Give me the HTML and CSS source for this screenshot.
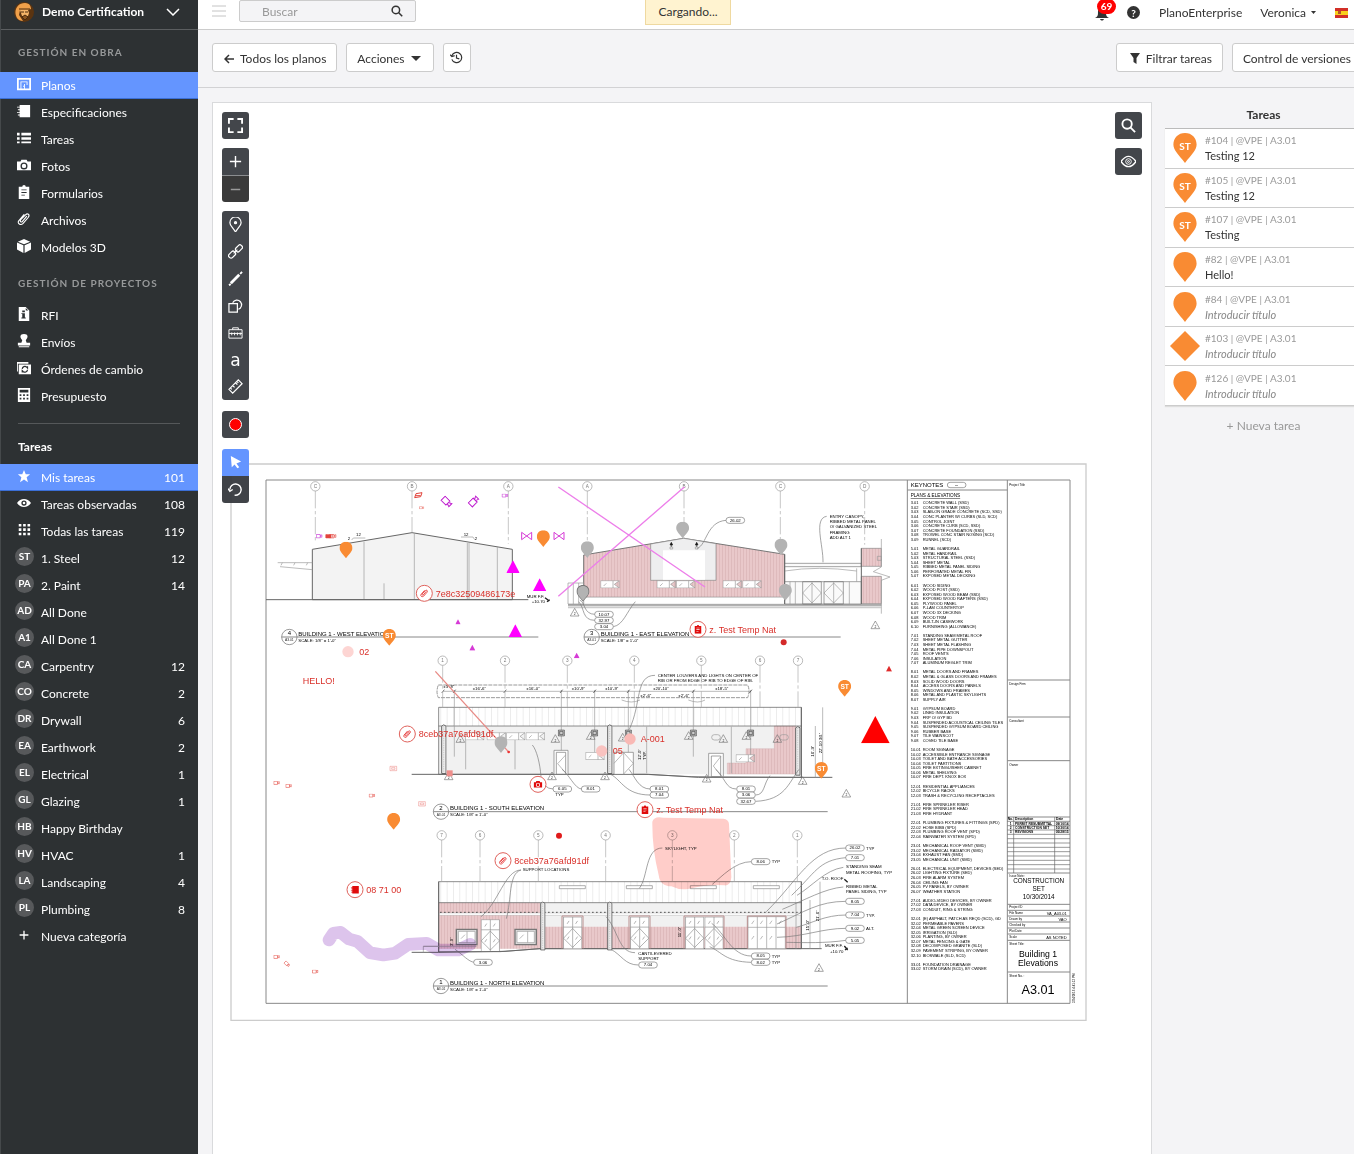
FILE: index.html
```html
<!DOCTYPE html>
<html lang="es">

<head>
    <meta charset="UTF-8">
    <meta name="viewport" content="width=device-width, initial-scale=1.0">
    <title>Planos - Demo Certification</title>
    <link rel="stylesheet" href="styles.css">
</head>

<body>
    <!-- Icon set -->
    <svg class="defs" aria-hidden="true">
        <symbol id="i-plan" viewBox="0 0 16 16"><path fill="currentColor" fill-rule="evenodd" d="M0 1h16v14H0zM2 3v10h2V5h8v4h-1V6H5v7h3v-2H7v-1h1V8h1v5h5V3z"/></symbol>
        <symbol id="i-book" viewBox="0 0 16 16"><path fill="currentColor" d="M3 1h12v14H3v-2H1v-1h2v-2H0V9h3V7H1V6h2V4H0V3h3z"/></symbol>
        <symbol id="i-list" viewBox="0 0 16 16"><path fill="currentColor" d="M0 2h3v3H0zM5 2h11v3H5zM0 7h3v3H0zM5 7h11v3H5zM0 12h3v2H0zM5 12h11v2H5z"/></symbol>
        <symbol id="i-camera" viewBox="0 0 16 16"><path fill="currentColor" fill-rule="evenodd" d="M5 2h6l1 2h4v10H0V4h4zM8 5a4 4 0 1 0 0 8 4 4 0 0 0 0-8zM8 6.500a2.500 2.500 0 1 1 0 5 2.500 2.500 0 0 1 0-5z"/></symbol>
        <symbol id="i-clip" viewBox="0 0 16 16"><path fill="currentColor" fill-rule="evenodd" d="M2 2h4a2 2 0 0 1 4 0h4v14H2zM5 5v1h6V5zM5 8v1h6V8zM5 11v1h4v-1z"/></symbol>
        <symbol id="i-attach" viewBox="0 0 16 16"><path fill="none" stroke="currentColor" stroke-width="1.300" stroke-linecap="round" d="M11 5l-5 6c-1 1-3 0-2-2l6-6c2-2 5 0 3 3l-6 7c-3 3-7 0-5-3l6-7"/></symbol>
        <symbol id="i-cube" viewBox="0 0 16 16"><path fill="currentColor" d="M8 0l7 3-7 3-7-3zM0 4l7.300 3.200V16L0 12zM16 4L8.700 7.200V16L16 12z"/></symbol>
        <symbol id="i-rfi" viewBox="0 0 16 16"><path fill="currentColor" fill-rule="evenodd" d="M2 0h8l4 4v12H2zM6 4v2h3V4zM5 7v1h1v4H5v1h5v-1H9V7zM10 1v3h3z"/></symbol>
        <symbol id="i-stamp" viewBox="0 0 16 16"><path fill="currentColor" d="M8 0c5 0 5 4 2 7l1 3h4v3H1v-3h4l1-3C3 4 3 0 8 0zM2 14h12v1H2z"/></symbol>
        <symbol id="i-change" viewBox="0 0 16 16"><path fill="currentColor" fill-rule="evenodd" d="M0 1h13v2H1v9H0zM2 4h14v11H2z"/><path fill="none" stroke="#2d3133" stroke-width="1.400" d="M6 9a3 3 0 0 1 5-2l1 1V6M12 10a3 3 0 0 1-5 2l-1-1v2"/></symbol>
        <symbol id="i-calc" viewBox="0 0 16 16"><path fill="currentColor" fill-rule="evenodd" d="M1 0h14v16H1zM3 2v3h10V2zM3 7v2h2V7zM7 7v2h2V7zM11 7v2h2V7zM3 11v2h2v-2zM7 11v2h2v-2zM11 11v2h2v-2z"/></symbol>
        <symbol id="i-star" viewBox="0 0 16 16"><path fill="currentColor" d="M8 1l2 5h5l-4 3.500 1.500 5.500L8 12l-4.500 3L5 9.500 1 6h5z"/></symbol>
        <symbol id="i-eye" viewBox="0 0 16 16"><path fill="currentColor" fill-rule="evenodd" d="M0 8c4-6 12-6 16 0-4 6-12 6-16 0zM8 5a3 3 0 1 0 0 6 3 3 0 0 0 0-6zM8 6.500a1.500 1.500 0 1 1 0 3 1.500 1.500 0 0 1 0-3z"/></symbol>
        <symbol id="i-grid" viewBox="0 0 16 16"><path fill="currentColor" d="M2 1h3v3H2zM7 1h3v3H7zM12 1h3v3h-3zM2 6h3v3H2zM7 6h3v3H7zM12 6h3v3h-3zM2 11h3v3H2zM7 11h3v3H7zM12 11h3v3h-3z"/></symbol>
        <symbol id="i-search" viewBox="0 0 16 16"><g fill="none" stroke="currentColor" stroke-width="2"><circle cx="6.500" cy="6.500" r="5"/><path d="M10 10l5 5"/></g></symbol>
        <symbol id="i-pin" viewBox="0 0 24 31"><path fill="currentColor" d="M12 0C5 0 0 5 0 12c0 6 5 10 12 19 7-9 12-13 12-19C24 5 19 0 12 0z"/></symbol>
    </svg>

    <div class="app">
        <aside class="sidebar">
            <button class="project" type="button">
                <svg class="avatar" viewBox="0 0 20 20" aria-hidden="true">
                    <circle cx="10" cy="10" r="10" fill="#5b3410"/>
                    <path d="M3 16C-1 9 3 1 11 1c5 0 6 4 6 6l-3 1H6l-1 5 4 6c-2 0-5-1-6-3z" fill="#f0a04a"/>
                    <path d="M6 8h8l1 3-1 3-3 1-3-1z" fill="#f5b468"/>
                    <path d="M5 7h11M7 10h3M11 10h3M8 15l3-2 3 2-3 3z" stroke="#4a2a0c" stroke-width="1" fill="#8a5420"/>
                </svg>
                <strong>Demo Certification</strong>
                <svg class="chevron" viewBox="0 0 14 8" aria-hidden="true"><path d="M1 1l6 6 6-6" fill="none" stroke="#fff" stroke-width="1.500"/></svg>
            </button>

            <h2>Gestión en obra</h2>
            <nav>
                <a class="active" href="#planos"><svg><use href="#i-plan"/></svg>Planos</a>
                <a href="#especificaciones"><svg><use href="#i-book"/></svg>Especificaciones</a>
                <a href="#tareas"><svg><use href="#i-list"/></svg>Tareas</a>
                <a href="#fotos"><svg><use href="#i-camera"/></svg>Fotos</a>
                <a href="#formularios"><svg><use href="#i-clip"/></svg>Formularios</a>
                <a href="#archivos"><svg><use href="#i-attach"/></svg>Archivos</a>
                <a href="#modelos"><svg><use href="#i-cube"/></svg>Modelos 3D</a>
            </nav>

            <h2 class="second">Gestión de proyectos</h2>
            <nav>
                <a href="#rfi"><svg><use href="#i-rfi"/></svg>RFI</a>
                <a href="#envios"><svg><use href="#i-stamp"/></svg>Envíos</a>
                <a href="#ordenes"><svg><use href="#i-change"/></svg>Órdenes de cambio</a>
                <a href="#presupuesto"><svg><use href="#i-calc"/></svg>Presupuesto</a>
            </nav>

            <hr>
            <h3>Tareas</h3>
            <nav>
                <a class="active" href="#mis"><svg><use href="#i-star"/></svg>Mis tareas<b>101</b></a>
                <a href="#observadas"><svg><use href="#i-eye"/></svg>Tareas observadas<b>108</b></a>
                <a href="#todas"><svg><use href="#i-grid"/></svg>Todas las tareas<b>119</b></a>
                <a href="#st"><i>ST</i>1. Steel<b>12</b></a>
                <a href="#pa"><i>PA</i>2. Paint<b>14</b></a>
                <a href="#ad"><i>AD</i>All Done</a>
                <a href="#a1"><i>A1</i>All Done 1</a>
                <a href="#ca"><i>CA</i>Carpentry<b>12</b></a>
                <a href="#co"><i>CO</i>Concrete<b>2</b></a>
                <a href="#dr"><i>DR</i>Drywall<b>6</b></a>
                <a href="#ea"><i>EA</i>Earthwork<b>2</b></a>
                <a href="#el"><i>EL</i>Electrical<b>1</b></a>
                <a href="#gl"><i>GL</i>Glazing<b>1</b></a>
                <a href="#hb"><i>HB</i>Happy Birthday</a>
                <a href="#hv"><i>HV</i>HVAC<b>1</b></a>
                <a href="#la"><i>LA</i>Landscaping<b>4</b></a>
                <a href="#pl"><i>PL</i>Plumbing<b>8</b></a>
                <a href="#nueva"><svg viewBox="0 0 16 16"><path d="M8 3v10M3 8h10" stroke="#fff" stroke-width="1.500"/></svg>Nueva categoría</a>
            </nav>
        </aside>

        <div class="main">
            <header class="topbar">
                <button class="menu" type="button" aria-label="Menú"><svg viewBox="0 0 14 12"><path d="M0 1h14M0 6h14M0 11h14" stroke="#c4c4c4"/></svg></button>
                <form class="search">
                    <input type="search" placeholder="Buscar" aria-label="Buscar">
                    <svg><use href="#i-search"/></svg>
                </form>
                <div class="user">
                    <button class="bell" type="button" aria-label="Notificaciones">
                        <svg viewBox="0 0 14 15"><path fill="#333" d="M7 1c4 0 4 4 4 6 0 3 1 4 3 5H0c2-1 3-2 3-5 0-2 0-6 4-6zM5 13h4c-1 2-3 2-4 0z"/></svg>
                        <span>69</span>
                    </button>
                    <button class="help" type="button" aria-label="Ayuda">?</button>
                    <a href="#empresa">PlanoEnterprise</a>
                    <button class="name" type="button">Veronica <svg viewBox="0 0 5 3"><path d="M0 0h5L2.500 3z" fill="#333"/></svg></button>
                    <svg class="flag" viewBox="0 0 13 10"><path fill="#d22f27" d="M0 0h13v10H0z"/><path fill="#f8cf1c" d="M0 3h13v4H0z"/><path fill="#b5532a" d="M3 3h3v3H3z"/></svg>
                </div>
            </header>

            <div class="toolbar">
                <button class="btn" type="button"><svg class="arrow" viewBox="0 0 11 10"><path d="M10 5H1M5 1L1 5l4 4" fill="none" stroke="#333" stroke-width="1.500"/></svg>Todos los planos</button>
                <button class="btn" type="button">Acciones<svg class="caret" viewBox="0 0 10 5"><path d="M0 0h10L5 5z" fill="#333"/></svg></button>
                <button class="btn square" type="button" aria-label="Historial"><svg viewBox="0 0 14 14"><path d="M2 5a5.500 5.500 0 1 1 0 4M0 4l2 2 3-1M7 4v3.500l3 1" fill="none" stroke="#333" stroke-width="1.300"/></svg></button>
                <span class="spacer"></span>
                <button class="btn" type="button"><svg class="funnel" viewBox="0 0 10 11"><path d="M0 0h10L6.500 5v6l-3-2V5z" fill="#333"/></svg>Filtrar tareas</button>
                <button class="btn" type="button">Control de versiones</button>
            </div>

            <div class="content">
                <main class="canvas">
                    <svg class="sheet" id="sheet" viewBox="0 0 2571 1674" role="img" aria-label="A3.01 Building 1 Elevations">
                        <defs>
                            <pattern id="siding" width="9" height="9" patternUnits="userSpaceOnUse"><path fill="#e9c8ca" d="M0 0h9v9H0z"/><path d="M1 0v9" stroke="#d4aeb1" stroke-width="2"/></pattern>
                            <pattern id="ribs" width="19" height="9" patternUnits="userSpaceOnUse"><path d="M1 0v9" stroke="#bbb"/></pattern>
                            <symbol id="door" viewBox="0 0 58 98"><path d="M1 98V1h56v97M29 1v97M1 32h56M1 66l28-30 28 30-28 28zM12 22l6-9M38 22l6-9M12 70l6-9M38 70l6-9" fill="#fff" stroke="#8d8d8d" stroke-width="2"/></symbol>
                            <symbol id="win" viewBox="0 0 58 24"><path d="M1 1h56v22H1zM38 1v22M10 17l8-8M57 1L42 12l15 11" fill="#fff" stroke="#999" stroke-width="2"/></symbol>
                            <symbol id="post" viewBox="0 0 17 150"><path d="M2 148V6q6-8 13 0v142z" fill="#eee" stroke="#666" stroke-width="3"/><path d="M8 6v140" stroke="#888" stroke-dasharray="4 3"/></symbol>
                            <symbol id="vent" viewBox="0 0 22 22"><path d="M2 2h18v18H2zM6 6h10v10H6z" fill="#ccc" stroke="#444" stroke-width="2"/></symbol>
                            <symbol id="cam" viewBox="0 0 22 14"><path d="M1 1h13v11H1zM14 5l6-3v8l-6-2" fill="none" stroke="currentColor" stroke-width="2"/></symbol>
                            <symbol id="tri" viewBox="0 0 40 38"><path d="M20 0l20 38H0z" fill="currentColor"/></symbol>
                        </defs>

                        <!-- Sheet frame -->
                        <path class="edge" d="M3 3h2565v1669H3z"/>
                        <path class="frame" d="M108 51h2412v1570H108zM2032 51v1570M2332 51v1570"/>

                        <!-- West elevation -->
                        <g transform="translate(-15 -24)">
                            <path d="M262 283L561 233 862 283V434H262z" fill="#f3f3f3" stroke="#666" stroke-width="3"/>
                            <path class="thin" d="M417 260V434M568 235V434M732 264V434M727 264V434M817 276V434M477 385V434M158 323H262M165 335L262 344M172 323l-4 8M210 323l-4 8M248 323l-4 8M380 255l5-6h36M708 246h36l5 8"/>
                            <path class="line" d="M123 434H910"/>
                            <text class="note" x="393" y="244">12</text><text class="note" x="368" y="254">2</text>
                            <text class="note" x="716" y="244">12</text><text class="note" x="749" y="254">2</text>
                            <text class="note" x="905" y="430">MUR F.F.</text><text class="note" x="920" y="445">+10.70</text>
                            <path d="M960 428l13 10M966 440l8-6" stroke="#222" stroke-width="4"/>
                        </g>

                        <!-- East elevation -->
                        <g transform="translate(990 -24)">
                            <path d="M71 300L371 250 674 298V427H71z" fill="url(#siding)" stroke="#777" stroke-width="3"/>
                            <path d="M272 267L371 250l97 16V376H272z" fill="#eeeeef" stroke="#888" stroke-width="2"/>
                            <path d="M309 286h126v88H309z" fill="#fff"/>
                            <path d="M71 427h603v20H71z" fill="#fff" stroke="#aaa"/>
                            <use href="#win" x="121" y="376" width="58" height="24"/><use href="#win" x="290" y="376" width="58" height="24"/>
                            <use href="#win" x="348" y="376" width="58" height="24"/><use href="#win" x="488" y="376" width="58" height="24"/>
                            <use href="#win" x="547" y="376" width="58" height="24"/>
                            <path d="M334 264v12M410 264v12M334 262l-4 8h8zM410 262l-4 8h8z" stroke="#222" stroke-width="2"/>
                            <path class="thin" d="M330 276h8v6h-8zM406 276h8v6h-8zM24 384h47v63H24zM40 384v63M56 384v63"/>
                            <path d="M674 325h230v10H674zM674 380h230v67H674zM728 380h56v67h-56zM792 380h58v67h-58z" fill="#fafafa" stroke="#777" stroke-width="2"/>
                            <path class="thin" d="M728 414l28-30 28 30-28 30zM792 414l29-30 29 30-29 30zM756 380v67M821 380v67M890 340v40M690 380v67M706 380v67M868 380v67M674 348q100-16 216 0M24 457h940"/>
                            <path d="M904 280h60v54h-60zM904 364h60v82h-60z" fill="url(#siding)" stroke="#888" stroke-width="2"/>
                            <path class="thin" d="M964 252v84l-24 14 50 16-26 10v100M952 304h12v12h-12z"/>
                            <path class="line" d="M24 450H964M904 280V447M674 298V447"/>
                            <path d="M24 457H964" stroke="#ccc" stroke-width="5"/>
                            <path class="lead" d="M498 196C440 200 440 270 412 280M800 184C760 190 790 270 789 322M105 478C70 478 75 440 60 436M105 496C65 496 75 460 56 440M160 515C190 510 200 470 226 440"/>
                            <text class="note"><tspan x="809" y="189">ENTRY CANOPY,</tspan><tspan x="809" y="205">RIBBED METAL PANEL</tspan><tspan x="809" y="220">O/ GALVANIZED STEEL</tspan><tspan x="809" y="236">FRAMING</tspan><tspan x="809" y="251">ADD ALT 1</tspan></text>
                        </g>

                        <!-- South elevation -->
                        <g transform="translate(-15 531)">
                            <path d="M641 202H1729V403H641z" fill="#f1f1f1"/>
                            <path d="M641 202H1729v56H641z" fill="#fff"/><path d="M641 202H1729v56H641z" fill="url(#ribs)"/>
                            <path d="M1648 258h64v144h-205v-33h56v-43h85z" fill="url(#siding)" stroke="#c9a5a7"/>
                            <path d="M641 202H1729V412L1400 410 1260 403H641zM641 258H1729" fill="none" stroke="#555" stroke-width="2"/>
                            <path class="line" d="M560 403H1270L1420 412H1822M1729 202V415"/>
                            <path class="thin" d="M722 290V388M870 300V388M1265 260V400M1519 260V400M688 150V350M1009 150V350M1109 150V350M1210 150V350M1405 150V350M1577 150V350M1793 202V412M1771 258V412"/>
                            <path d="M640 135H1568q8 16 0 38H640q-8-18 0-38z" fill="none" stroke="#999" stroke-width="3" stroke-dasharray="12 3"/>
                            <path class="thin" d="M655 154H1577M1190 180q30 12 55 0M1390 180q30 12 50 0"/>
                            <path d="M650 159l8-10M684 159l8-10M836 159l8-10M1005 159l8-10M1105 159l8-10M1206 159l8-10M1401 159l8-10M1573 159l8-10" stroke="#333" stroke-width="2"/>
                            <use href="#win" x="720" y="277" width="58" height="24"/><use href="#win" x="785" y="277" width="58" height="24"/>
                            <use href="#win" x="843" y="277" width="58" height="24"/><use href="#win" x="902" y="277" width="58" height="24"/>
                            <use href="#win" x="1081" y="336" width="58" height="24"/><use href="#win" x="1532" y="343" width="58" height="24"/>
                            <use href="#vent" x="998" y="268" width="22" height="22"/><use href="#vent" x="1098" y="268" width="22" height="22"/>
                            <use href="#vent" x="1199" y="268" width="22" height="22"/><use href="#vent" x="1394" y="268" width="22" height="22"/>
                            <use href="#vent" x="1566" y="268" width="22" height="22"/>
                            <use href="#post" x="648" y="250" width="17" height="155"/><use href="#post" x="1146" y="250" width="17" height="155"/><use href="#post" x="1710" y="250" width="17" height="165"/>
                            <path d="M987 403v-72h42v72zM994 403v-66h28v66zM1167 403v-66h58v66zM1451 410v-70h44v70zM1459 410v-62h28v62z" fill="#fff" stroke="#777" stroke-width="2"/>
                            <path class="thin" d="M1196 337v66M1167 370l29-32 29 32-29 32M1022 345l-24 26 24 28M1487 350l-22 28 22 28"/>
                            <rect class="thin" x="1460" y="284" width="26" height="16" rx="8" /><rect class="thin" x="1664" y="284" width="26" height="16" rx="8"/>
                            <path class="lead" d="M1290 106C1230 106 1250 190 1213 268M948 410C945 370 935 330 922 315M1070 447C1050 447 1030 400 1011 388M1276 447C1240 447 1230 410 1212 388M1276 465C1200 465 1190 420 1157 403M1534 447C1500 447 1500 410 1472 388M1592 465C1620 465 1615 430 1635 407M1592 484C1680 480 1690 430 1722 388M985 447q-15 0-25-10"/>
                            <text class="note"><tspan x="1298" y="110">CENTER LOUVERS AND LIGHTS ON CENTER OF</tspan><tspan x="1298" y="126">RIB OR FROM EDGE OF RIB TO EDGE OF RIB.</tspan></text>
                            <text class="note" x="655" y="144">±3'-8"</text><text class="note" x="743" y="150">±16'-6"</text><text class="note" x="904" y="150">±16'-0"</text>
                            <text class="note" x="1040" y="150">±10'-9"</text><text class="note" x="1140" y="150">±10'-9"</text><text class="note" x="1284" y="150">±20'-10"</text><text class="note" x="1470" y="150">±18'-5"</text>
                            <text class="note" x="1246" y="171">±2'-6"</text><text class="note" x="1360" y="171">±2'-6"</text>
                            <text class="note" transform="translate(1248 360) rotate(-90)">12'-0"</text><text class="note" transform="translate(1263 360) rotate(-90)">TYP.</text>
                            <text class="note" transform="translate(1766 350) rotate(-90)">16'-9"</text><text class="note" transform="translate(1790 340) rotate(-90)">22'-10 3/4"</text>
                            <text class="note" x="991" y="468">TYP</text>
                        </g>

                        <!-- North elevation -->
                        <g transform="translate(-15 1131)">
                            <path d="M641 125H1729v63H641z" fill="#fff"/><path d="M641 125H1729v63H641z" fill="url(#ribs)"/>
                            <path d="M641 188H1729v138H641z" fill="#f1f1f1"/>
                            <path d="M641 188h304v138H641zM945 260h784v66H945z" fill="url(#siding)"/>
                            <path d="M641 125H1729V326H945L825 335H641zM641 188H1729" fill="none" stroke="#555" stroke-width="2"/>
                            <path d="M643 219H1729v7H643z" fill="#fff" stroke="#999"/>
                            <path d="M645 217H1729" stroke="#555" stroke-width="3" stroke-dasharray="5 7"/>
                            <path class="line" d="M560 337H640L840 334 945 326H1790M641 125V337M1729 125V326"/>
                            <use href="#door" x="767" y="238" width="58" height="96"/><use href="#door" x="1014" y="230" width="58" height="96"/>
                            <use href="#door" x="1215" y="230" width="58" height="96"/><use href="#door" x="1380" y="230" width="58" height="96"/><use href="#door" x="1438" y="230" width="58" height="96"/>
                            <path d="M1569 230h112v96h-112zM1597 230v96M1625 230v96M1653 230v96M1569 262h112M1580 252l7-10M1606 252l7-10M1634 252l7-10M1662 252l7-10M1580 298l7-10M1606 298l7-10M1634 298l7-10" fill="#fff" stroke="#999" stroke-width="2"/>
                            <path d="M1011 326v-98h63v98M1212 326v-98h63v98M1377 326v-98h120v98M1567 326v-98h116v98" fill="none" stroke="#b98f8f" stroke-width="3"/>
                            <path d="M694 268h62v46h-62zM870 268h64v46h-64z" fill="#ddd" stroke="#777" stroke-width="4"/>
                            <path d="M700 274h50v34h-50zM726 274v34M876 274h52v34h-52zM908 274v34M708 296l12-12M884 296l12-12" fill="#fff" stroke="#999" stroke-width="2"/>
                            <path d="M1003 137h78v9h-78zM1204 137h78v9h-78zM1396 137h78v9h-78zM1585 137h78v9h-78z" fill="#fff" stroke="#888" stroke-width="2"/>
                            <use href="#post" x="945" y="184" width="17" height="148"/><use href="#post" x="1146" y="184" width="17" height="148"/>
                            <path class="thin" d="M595 337v-18h48M595 319h160M1713 190v136M1755 180v146M1785 125v201"/>
                            <path class="lead" d="M888 90C840 90 820 190 768 230M888 90C850 100 860 180 844 236M1312 24C1260 24 1270 110 1243 145M1579 65C1530 65 1490 110 1462 133M1863 24C1760 24 1720 120 1624 215M1863 53C1780 60 1770 100 1700 166M1855 82C1800 90 1760 140 1716 166M1855 141C1800 145 1740 180 1672 208M1863 184C1780 184 1740 215 1656 252M1863 225C1800 225 1760 250 1714 262M1863 265C1790 265 1740 290 1656 292M1863 301C1800 310 1740 308 1684 307M1230 338C1180 338 1180 270 1143 230M1240 375C1200 375 1190 345 1158 328M1579 348C1520 348 1500 280 1460 250M1579 367C1500 365 1490 335 1454 320M748 367C730 365 715 345 690 328"/>
                            <text class="note" x="893" y="94">SUPPORT LOCATIONS</text>
                            <text class="note" x="1320" y="29">SKYLIGHT, TYP</text>
                            <text class="note"><tspan x="1240" y="344">CANTILEVERED</tspan><tspan x="1240" y="360">SUPPORT</tspan></text>
                            <text class="note"><tspan x="1863" y="85">STANDING SEAM</tspan><tspan x="1863" y="101">METAL ROOFING, TYP</tspan><tspan x="1790" y="121">T.O. ROOF</tspan><tspan x="1863" y="145">RIBBED METAL</tspan><tspan x="1863" y="160">PANEL SIDING, TYP</tspan><tspan x="1800" y="322">MUR F.F.</tspan><tspan x="1815" y="338">+10.70</tspan></text>
                            <path d="M1858 118l10 9M1858 318l10 12M1860 330l8-6" stroke="#222" stroke-width="4"/>
                            <text class="note" transform="translate(1753 272) rotate(-90)">15'-0"</text><text class="note" transform="translate(1782 244) rotate(-90)">21'-6"</text>
                            <text class="note" transform="translate(1367 292) rotate(-90)">11'-0"</text><text class="note" transform="translate(684 318) rotate(-90)">3'-0"</text>
                        </g>

                        <!-- Bubbles, tags, elevation titles and keynotes are filled in by the script below -->
                        <g id="marks"></g>
                        <g id="keynotes"></g>

                        <!-- Title block -->
                        <g class="block">
                            <path class="frame" d="M2032 81h300M2332 651h188M2332 762h188M2332 893h188M2332 1062h188M2332 1230h188M2332 1324h188M2332 1342h188M2332 1359h188M2332 1377h188M2332 1395h188M2332 1413h188M2332 1432h188M2332 1527h188"/>
                            <path d="M2332 1075h188M2332 1088h188M2332 1101h188M2332 1114h188M2332 1127h188M2332 1140h188M2332 1153h188M2332 1166h188M2332 1179h188M2332 1192h188M2332 1205h188M2332 1218h188M2351 1062v168M2474 1062v168" stroke="#666" stroke-width="2"/>
                            <text x="2042" y="72" font-size="18">KEYNOTES</text><rect x="2152" y="58" width="56" height="16" rx="8" fill="none" stroke="#777" stroke-width="2"/><text x="2175" y="69" font-size="9">---</text>
                            <text x="2042" y="103" font-size="14" text-decoration="underline">PLANS &amp; ELEVATIONS</text>
                            <g font-size="9">
                                <text x="2338" y="68">Project Title</text><text x="2338" y="665">Design Firm</text><text x="2338" y="777">Consultant</text><text x="2338" y="908">Owner</text>
                                <text x="2338" y="1243">Issue Note:</text><text x="2338" y="1336">Project ID</text><text x="2338" y="1354">File Name</text><text x="2338" y="1371">Drawn by</text><text x="2338" y="1389">Checked by</text><text x="2338" y="1407">Plot Date</text><text x="2338" y="1425">Scale</text><text x="2338" y="1446">Sheet Title:</text><text x="2338" y="1541">Sheet No. :</text>
                            </g>
                            <g font-size="10" font-weight="bold">
                                <text x="2333" y="1072">No.</text><text x="2355" y="1072">Description</text><text x="2478" y="1072">Date</text>
                                <text x="2339" y="1085">1</text><text x="2355" y="1085">PERMIT RESUBMITTAL</text><text x="2477" y="1085">09/10/14</text>
                                <text x="2339" y="1098">2</text><text x="2355" y="1098">CONSTRUCTION SET</text><text x="2477" y="1098">10/30/14</text>
                                <text x="2339" y="1111">3</text><text x="2355" y="1111">REVISIONS</text><text x="2477" y="1111">05/28/15</text>
                            </g>
                            <g font-size="12" text-anchor="end"><text x="2510" y="1355">VA_A03.01</text><text x="2510" y="1373">VAO</text><text x="2510" y="1427">AS NOTED</text></g>
                            <g font-size="19" text-anchor="middle"><text x="2426" y="1261">CONSTRUCTION</text><text x="2426" y="1284">SET</text><text x="2426" y="1308">10/30/2014</text></g>
                            <g font-size="26" text-anchor="middle"><text x="2424" y="1481">Building 1</text><text x="2424" y="1509">Elevations</text></g>
                            <text x="2424" y="1593" font-size="38" text-anchor="middle">A3.01</text>
                            <text transform="translate(2536 1620) rotate(-90)" font-size="9">2/24/2016 4:41:12 PM</text>
                        </g>

                        <!-- Freehand markups -->
                        <path class="wash" d="M1267 1076q5-18 33-12l180 3q16 2 17 16l7 160q-2 26-20 24-45-5-110 11-26 4-50-8-34 0-38-34-20-80-19-160z" fill="#ffcdc9"/>
                        <path class="wash" d="M297 1431l13-20 22-3 25 20 25 7 38 34 40 7 35-5 40-27 55-3 35 20h60l35-17" fill="none" stroke="#ddc4ec" stroke-width="38" stroke-linecap="round" stroke-linejoin="round"/>
                        <path d="M985 72L1425 372M985 400L1363 72" stroke="#ed7eea" stroke-width="4"/>
                        <path d="M616 625L835 866" stroke="#e88a85" stroke-width="4"/><circle cx="836" cy="867" r="4" fill="#e33"/>
                        <circle cx="354" cy="566" r="17" fill="#fdd5d3"/><circle cx="1115" cy="864" r="17" fill="#f9c3c0"/><circle cx="1200" cy="828" r="17" fill="#f9b9b5"/>
                        <circle cx="1661" cy="538" r="9" fill="#d42a2a"/><circle cx="987" cy="1118" r="9" fill="#e01b1b"/><path d="M650 922h18v18h-18z" fill="#ef8f8c"/>
                        <g><use href="#tri" x="829" y="292" width="40" height="38" color="#f0f"/><use href="#tri" x="909" y="346" width="40" height="38" color="#f0f"/><use href="#tri" x="836" y="484" width="40" height="38" color="#f0f"/><use href="#tri" x="676" y="468" width="16" height="17" color="#d63ad6"/><use href="#tri" x="718" y="545" width="18" height="18" color="#d63ad6"/><use href="#tri" x="1031" y="569" width="18" height="17" color="#d63ad6"/></g>
                        <use href="#tri" x="1891" y="759" width="90" height="82" color="#f00"/><use href="#tri" x="1968" y="608" width="18" height="18" color="#e02a2a"/>
                        <path d="M875 208v22l30-22v22zM972 208v22l30-22v22z" fill="none" stroke="#d63ad6" stroke-width="3"/>
                        <g color="#e2443c">
                            <use href="#cam" x="285" y="213" width="26" height="14"/><use href="#cam" x="298" y="213" width="22" height="14"/><use href="#cam" x="566" y="130" width="18" height="9"/>
                            <use href="#cam" x="130" y="954" width="20" height="12"/><use href="#cam" x="166" y="963" width="20" height="12"/><use href="#cam" x="416" y="992" width="20" height="12"/>
                            <use href="#cam" x="130" y="1476" width="20" height="12"/><use href="#cam" x="246" y="1520" width="20" height="12"/><use href="#cam" transform="translate(168 1492) rotate(45)" width="20" height="12"/>
                            <path d="M287 215h16v10h-16z" fill="currentColor"/>
                            <path d="M558 92l18-3-4 12-18 3zM556 98h16" fill="none" stroke="currentColor" stroke-width="3"/>
                            <path d="M480 910h20v13h-20zM485 914h10v5h-10zM566 1016h20v13h-20zM571 1020h10v5h-10z" fill="none" stroke="currentColor"/>
                        </g>
                        <g color="#c020d0"><use href="#cam" transform="translate(645 97) rotate(45)" width="36" height="22"/><use href="#cam" transform="translate(712 120) rotate(-45)" width="36" height="22"/><use href="#cam" x="814" y="92" width="22" height="12"/><use href="#cam" x="258" y="213" width="20" height="14"/></g>
                        <text class="red" x="388" y="576">02</text><text class="red" x="218" y="662">HELLO!</text>
                        <text class="red" x="1148" y="873">05</text><text class="red" x="1232" y="837">A-001</text>
                        <g id="pins"></g>
                    </svg>

                    <div class="tools left">
                        <div class="group"><button type="button" aria-label="Pantalla completa"><svg viewBox="0 0 16 16"><path d="M1 6V1h5M10 1h5v5M15 10v5h-5M6 15H1v-5" stroke-width="2"/></svg></button></div>
                        <div class="group zoom">
                            <button type="button" aria-label="Acercar"><svg viewBox="0 0 16 16"><path d="M8 2v12M2 8h12" stroke-width="1.500"/></svg></button>
                            <button type="button" aria-label="Alejar" disabled><svg viewBox="0 0 16 16"><path d="M3 8h10" stroke-width="1.500"/></svg></button>
                        </div>
                        <div class="group">
                            <button type="button" aria-label="Tarea"><svg viewBox="0 0 16 16"><path d="M8 16C5 11 2 9 2 6a6 6 0 0 1 12 0c0 3-3 5-6 10z" stroke-width="1.300"/><circle cx="8" cy="6" r="1" stroke-width="1.500"/></svg></button>
                            <button type="button" aria-label="Enlace"><svg viewBox="0 0 16 16"><g stroke-width="1.300"><rect x="0" y="9" width="8" height="5" rx="2" transform="rotate(-45 4 11)"/><rect x="8" y="2" width="8" height="5" rx="2" transform="rotate(-45 12 5)"/><path d="M6 10l4-4"/></g></svg></button>
                            <button type="button" aria-label="Lápiz"><svg viewBox="0 0 16 16"><path d="M3 13L12 4" stroke-width="3"/><path d="M13 3l2-2M1 15l2-1" stroke-width="2"/></svg></button>
                            <button type="button" aria-label="Formas"><svg viewBox="0 0 16 16"><path d="M1 6h9v9H1zM5 5a5 5 0 1 1 6 7" stroke-width="1.300"/></svg></button>
                            <button type="button" aria-label="Caja de herramientas"><svg viewBox="0 0 16 16"><path d="M5 5V3h6v2M1 5h14v9H1zM1 9h14M4 8v3M7 8v3M10 8v3M13 8v3"/></svg></button>
                            <button class="letter" type="button" aria-label="Texto">a</button>
                            <button type="button" aria-label="Medir"><svg viewBox="0 0 16 16"><path d="M1 11L11 1l4 4L5 15zM5 7l2 2M8 4l2 2M3 10l1 1M10 3l1 1" stroke-width="1.300"/></svg></button>
                        </div>
                        <div class="group lower"><button type="button" aria-label="Color"><span class="dot"></span></button></div>
                        <div class="group lower">
                            <button class="on" type="button" aria-label="Seleccionar"><svg viewBox="0 0 16 16"><path d="M3 1l11 6-5 2 3 4-2 1-3-4-3 3z" fill="#fff" stroke="none"/></svg></button>
                            <button class="clear" type="button" aria-label="Deshacer"><svg viewBox="0 0 16 16"><path d="M2 8a6 6 0 1 1 5 6M0 7l2 3 3-2" stroke-width="1.500"/></svg></button>
                        </div>
                    </div>
                    <div class="tools right">
                        <div class="group"><button type="button" aria-label="Buscar en el plano"><svg><use href="#i-search"/></svg></button></div>
                        <div class="group"><button type="button" aria-label="Visibilidad"><svg viewBox="0 0 16 16"><path d="M0 8q8-11 16 0-8 11-16 0z" stroke-width="1.500"/><circle cx="8" cy="8" r="3"/><circle cx="8" cy="8" r="1"/></svg></button></div>
                    </div>
                </main>

                <section class="tasks">
                    <h2>Tareas</h2>
                    <ul>
                        <li><span class="pin"><svg><use href="#i-pin"/></svg>ST</span><div><small>#104 | @VPE | A3.01</small><p>Testing 12</p></div></li>
                        <li><span class="pin"><svg><use href="#i-pin"/></svg>ST</span><div><small>#105 | @VPE | A3.01</small><p>Testing 12</p></div></li>
                        <li><span class="pin"><svg><use href="#i-pin"/></svg>ST</span><div><small>#107 | @VPE | A3.01</small><p>Testing</p></div></li>
                        <li><span class="pin"><svg><use href="#i-pin"/></svg></span><div><small>#82 | @VPE | A3.01</small><p>Hello!</p></div></li>
                        <li><span class="pin"><svg><use href="#i-pin"/></svg></span><div><small>#84 | @VPE | A3.01</small><p class="empty">Introducir título</p></div></li>
                        <li><span class="pin"><svg class="diamond" viewBox="0 0 30 30"><path d="M15 0l15 15-15 15L0 15z" fill="currentColor"/></svg></span><div><small>#103 | @VPE | A3.01</small><p class="empty">Introducir título</p></div></li>
                        <li><span class="pin"><svg><use href="#i-pin"/></svg></span><div><small>#126 | @VPE | A3.01</small><p class="empty">Introducir título</p></div></li>
                    </ul>
                    <button type="button">+ Nueva tarea</button>
                </section>
            </div>
        </div>
        <div class="toast" role="status">Cargando...</div>
    </div>

    <script src="sheet.js"></script>
</body>

</html>
```
FILE: sheet.js
```js
var marks = document.getElementById('marks');
var pins = document.getElementById('pins');
var notes = document.getElementById('keynotes');

function add(parent, tag, attrs, text) {
    var el = document.createElementNS('http://www.w3.org/2000/svg', tag);
    for (var key in attrs) {
        el.setAttribute(key, attrs[key]);
    }
    if (text) {
        el.textContent = text;
    }
    parent.appendChild(el);
    return el;
}

// Grid bubbles: x, y, label, end of the grid line
[
    [256, 70, 'C', 240], [546, 70, 'B', 208], [835, 70, 'A', 242],
    [1072, 70, 'A', 245], [1362, 70, 'B', 226], [1651, 70, 'C', 240], [1904, 70, 'D', 245],
    [638, 593, '1', 733], [825, 593, '2', 733], [1012, 593, '3', 733], [1213, 593, '4', 733],
    [1414, 593, '5', 733], [1590, 593, '6', 733], [1704, 593, '7', 733],
    [635, 1117, '7', 1255], [750, 1117, '6', 1255], [925, 1117, '5', 1255], [1127, 1117, '4', 1255],
    [1327, 1117, '3', 1255], [1513, 1117, '2', 1255], [1702, 1117, '1', 1255]
].forEach(function (b) {
    add(marks, 'path', { class: 'axis', d: 'M' + b[0] + ' ' + (b[1] + 14) + 'V' + b[3] });
    add(marks, 'circle', { class: 'bubble', cx: b[0], cy: b[1], r: 14 });
    add(marks, 'text', { class: 'letter', x: b[0], y: b[1] + 5 }, b[2]);
});

// Keynote tags: centre, number, suffix
[
    [1516, 172, '26.02'], [1122, 454, '10.07'], [1122, 472, '32.97'], [1122, 491, '3.04'],
    [1082, 978, '8.01'], [997, 978, '6.05'], [1288, 978, '8.01'], [1288, 996, '7.04'],
    [1548, 978, '8.01'], [1548, 996, '3.06'], [1548, 1015, '32.67'],
    [1592, 1196, '8.06', 'TYP'], [1875, 1155, '26.02', 'TYP'], [1875, 1184, '7.01'],
    [1875, 1315, '8.05'], [1875, 1356, '7.04', 'TYP.'], [1875, 1396, '9.02', 'ALT.'], [1875, 1432, '5.05'],
    [1592, 1479, '8.05', 'TYP'], [1592, 1498, '8.02', 'TYP'], [1254, 1506, '7.04'], [759, 1498, '3.06']
].forEach(function (t) {
    add(marks, 'rect', { class: 'tag', x: t[0] - 28, y: t[1] - 9, width: 56, height: 18, rx: 9 });
    add(marks, 'text', { class: 'note mid', x: t[0], y: t[1] + 4 }, t[2]);
    if (t[3]) {
        add(marks, 'text', { class: 'note', x: t[0] + 33, y: t[1] + 5 }, t[3]);
    }
});

// Revision triangles
[
    [1034, 450], [1936, 488], [1849, 993], [1767, 1516], [691, 829], [976, 829], [656, 941], [966, 941],
    [1125, 941], [1430, 948], [1718, 955], [1082, 820], [1178, 825], [1376, 820], [1480, 829], [1549, 820], [1642, 829]
].forEach(function (r) {
    add(marks, 'path', { class: 'delta', d: 'M' + r[0] + ' ' + (r[1] - 14) + 'l13 23h-26z' });
    add(marks, 'text', { class: 'tiny', x: r[0], y: r[1] + 7 }, '2');
});

// Elevation titles
[
    [178, 522, '4', 'WEST', 925], [1085, 522, '3', 'EAST', 1832],
    [633, 1046, '2', 'SOUTH', 1793], [633, 1569, '1', 'NORTH', 1793]
].forEach(function (e) {
    add(marks, 'circle', { class: 'title-ring', cx: e[0], cy: e[1], r: 23 });
    add(marks, 'path', { class: 'title-line', d: 'M' + (e[0] - 23) + ' ' + e[1] + 'H' + e[4] });
    add(marks, 'text', { class: 'title mid', x: e[0], y: e[1] - 5 }, e[2]);
    add(marks, 'text', { class: 'tiny', x: e[0], y: e[1] + 13 }, 'A3.01');
    add(marks, 'text', { class: 'title', x: e[0] + 27, y: e[1] - 4 }, 'BUILDING 1 - ' + e[3] + ' ELEVATION');
    add(marks, 'text', { class: 'note', x: e[0] + 27, y: e[1] + 14 }, 'SCALE:  1/8" = 1\'-0"');
});

// Pins: tip-centred x, y, colour, label
[
    [348, 261, '#f98b33'], [940, 227, '#f98b33'], [478, 523, '#f98b33', 'ST'], [1844, 676, '#f98b33', 'ST'],
    [1774, 922, '#f98b33', 'ST'], [491, 1075, '#f98b33'],
    [1358, 201, '#b3b3b3'], [1072, 260, '#b3b3b3'], [1653, 252, '#b3b3b3'], [1666, 388, '#b3b3b3'],
    [1059, 391, '#777777'], [1059, 391, '#b3b3b3', '', 34], [813, 845, '#b3b3b3']
].forEach(function (p) {
    var width = p[4] || 40;
    var height = width + 10;
    add(pins, 'use', { href: '#i-pin', x: p[0] - width / 2, y: p[1] - height / 2, width: width, height: height, color: p[2] });
    if (p[3]) {
        add(pins, 'text', { class: 'pin-text', x: p[0], y: p[1] + 2 }, p[3]);
    }
});

// Linked items: x, y, icon, label
[
    [583, 391, 'attach', '7e8c32509486173e'], [532, 813, 'attach', '8ceb37a76afd91df.'],
    [819, 1193, 'attach', '8ceb37a76afd91df'], [1404, 499, 'clip', 'z. Test Temp Nat'],
    [1245, 1040, 'clip', 'z. Test Temp Nat'], [924, 964, 'camera', ''], [375, 1280, 'book', '08 71 00']
].forEach(function (k) {
    add(pins, 'circle', { class: 'link-ring', cx: k[0], cy: k[1], r: 24 });
    add(pins, 'use', { href: '#i-' + k[2], x: k[0] - 13, y: k[1] - 13, width: 26, height: 26, color: '#e00b0b' });
    add(pins, 'text', { class: 'red', x: k[0] + 34, y: k[1] + 10 }, k[3]);
});

// Keynote schedule, a blank entry separates the divisions
var keynotes = [
    '3.01|CONCRETE WALL (SSD)', '3.02|CONCRETE STAIR (SSD)', '3.03|SLAB-ON GRADE CONCRETE (SCD, SSD)',
    '3.04|CONC PLANTER W/ CURBS (SLD, SCD)', '3.05|CONTROL JOINT', '3.06|CONCRETE CURB (SCD, SSD)',
    '3.07|CONCRETE FOUNDATION (SSD)', '3.08|TROWEL CONC STAIR NOSING (SCD)', '3.09|RUNNEL (SCD)', '',
    '5.01|METAL GUARDRAIL', '5.02|METAL HANDRAIL', '5.03|STRUCTURAL STEEL (SSD)', '5.04|SHEET METAL',
    '5.05|RIBBED METAL PANEL SIDING', '5.06|PERFORATED METAL FIN', '5.07|EXPOSED METAL DECKING', '',
    '6.01|WOOD SIDING', '6.02|WOOD POST (SSD)', '6.03|EXPOSED WOOD BEAM (SSD)', '6.04|EXPOSED WOOD RAFTERS (SSD)',
    '6.05|PLYWOOD PANEL', '6.06|P-LAM COUNTERTOP', '6.07|WOOD 3X DECKING', '6.08|WOOD TRIM',
    '6.09|BUILT-IN CASEWORK', '6.10|FURNISHING (ALLOWANCE)', '',
    '7.01|STANDING SEAM METAL ROOF', '7.02|SHEET METAL GUTTER', '7.03|SHEET METAL FLASHING',
    '7.04|METAL PIPE DOWNSPOUT', '7.05|ROOF VENTS', '7.06|INSULATION', '7.07|ALUMINUM REGLET TRIM', '',
    '8.01|METAL DOORS AND FRAMES', '8.02|METAL & GLASS DOORS AND FRAMES', '8.03|SOLID WOOD DOORS',
    '8.04|ACCESS DOORS AND PANELS', '8.05|WINDOWS AND FRAMES', '8.06|METAL AND PLASTIC SKYLIGHTS', '8.07|SUPPLY AIR', '',
    '9.01|GYPSUM BOARD', '9.02|LINED INSULATION', '9.03|FRP O/ GYP BD', '9.04|SUSPENDED ACOUSTICAL CEILING TILES',
    '9.05|SUSPENDED GYPSUM BOARD CEILING', '9.06|RUBBER BASE', '9.07|TILE WAINSCOT', '9.08|COVED TILE BASE', '',
    '10.01|ROOM SIGNAGE', '10.02|ACCESSIBLE ENTRANCE SIGNAGE', '10.03|TOILET AND BATH ACCESSORIES',
    '10.04|TOILET PARTITIONS', '10.05|FIRE EXTINGUISHER CABINET', '10.06|METAL SHELVING', '10.07|FIRE DEPT. KNOX BOX', '',
    '12.01|RESIDENTIAL APPLIANCES', '12.02|BICYCLE RACKS', '12.03|TRASH & RECYCLING RECEPTACLES', '',
    '21.01|FIRE SPRINKLER RISER', '21.02|FIRE SPRINKLER HEAD', '21.03|FIRE HYDRANT', '',
    '22.01|PLUMBING FIXTURES & FITTINGS (SPD)', '22.02|HOSE BIBB (SPD)', '22.03|PLUMBING ROOF VENT (SPD)',
    '22.04|RAINWATER SYSTEM (SPD)', '',
    '23.01|MECHANICAL ROOF VENT (SMD)', '23.02|MECHANICAL RADIATOR (SMD)', '23.04|EXHAUST FAN (SMD)',
    '23.05|MECHANICAL UNIT (SMD)', '',
    '26.01|ELECTRICAL EQUIPMENT, DEVICES (SED)', '26.02|LIGHTING FIXTURE (SED)', '26.03|FIRE ALARM SYSTEM',
    '26.04|CEILING FAN', '26.05|PV PANELS, BY OWNER', '26.07|WEATHER STATION', '',
    '27.01|AUDIO-VIDEO DEVICES, BY OWNER', '27.02|DATA DEVICE, BY OWNER', '27.03|CONDUIT, RING & STRING', '',
    '32.01|(E) ASPHALT, PATCH AS REQD (SCD), GD', '32.02|PERMEABLE PAVERS', '32.04|METAL GREEN SCREEN DEVICE',
    '32.05|IRRIGATION (SLD)', '32.06|PLANTING, BY OWNER', '32.07|METAL FENCING & GATE',
    '32.08|DECOMPOSED GRANITE (SLD)', '32.09|PAVEMENT STRIPING, BY OWNER', '32.10|BIOSWALE (SLD, SCD)', '',
    '33.01|FOUNDATION DRAINAGE', '33.02|STORM DRAIN (SCD), BY OWNER'
];
keynotes.forEach(function (line, i) {
    if (!line) {
        return;
    }
    var y = Math.round(124 + i * 1398 / (keynotes.length - 1));
    var parts = line.split('|');
    add(notes, 'text', { x: 2042, y: y }, parts[0]);
    add(notes, 'text', { x: 2078, y: y }, parts[1]);
});
```
FILE: styles.css
```css
* {
    box-sizing: border-box;
}

body {
    margin: 0;
    overflow-x: hidden;
    font-family: Lato, "Liberation Sans", sans-serif;
    font-size: 12px;
    line-height: 16px;
    color: #333;
    background-color: #f4f4f6;
}

button,
input {
    font: inherit;
    color: inherit;
}

button {
    display: flex;
    align-items: center;
    padding: 0;
    border: none;
    background: none;
    cursor: pointer;
}

a {
    color: inherit;
    text-decoration: none;
}

h2,
h3,
p,
ul {
    margin: 0;
    padding: 0;
}

.defs {
    display: none;
}

/* the working area runs a little past the right edge of the window */
.app {
    position: relative;
    display: flex;
    width: calc(100% + 8px);
    min-height: 100vh;
}

/* Sidebar */
.sidebar {
    flex: 0 0 198px;
    background-color: #2d3133;
    border-left: 1px solid #45494b;
    color: #fff;
}

.project {
    width: 100%;
    height: 30px;
    padding: 0 18px 5px 13px;
    border-bottom: 1px solid #5b5e60;
}

.avatar {
    width: 20px;
    height: 20px;
    margin-right: 8px;
}

.chevron {
    width: 14px;
    height: 8px;
    margin-left: auto;
}

.sidebar h2 {
    padding: 14px 17px 12px;
    font-size: 10px;
    letter-spacing: 1px;
    text-transform: uppercase;
    color: #97999a;
}

.sidebar h2.second {
    padding-bottom: 11px;
}

.sidebar h3 {
    padding: 15px 17px 9px;
    font-size: 12px;
}

.sidebar hr {
    margin: 13px 18px 0 17px;
    border: none;
    border-top: 1px solid #55585a;
}

.sidebar nav a {
    display: flex;
    align-items: center;
    height: 27px;
    padding: 0 13px;
}

.sidebar nav a.active {
    margin-left: -1px;
    padding-left: 14px;
    background-color: #6495ff;
    box-shadow: inset 0 -1px #3b6fd6;
}

.sidebar nav svg {
    width: 14px;
    height: 14px;
    margin: 0 10px 3px 3px;
}

.sidebar nav i {
    width: 19px;
    height: 19px;
    margin: 0 7px 4px 1px;
    border-radius: 50%;
    background-color: #57595b;
    font-size: 10px;
    font-style: normal;
    font-weight: bold;
    line-height: 19px;
    text-align: center;
}

.sidebar nav b {
    margin-left: auto;
    font-weight: normal;
}

/* Top bar */
.main {
    flex: 1;
    display: flex;
    flex-direction: column;
    min-width: 0;
}

.topbar {
    display: flex;
    align-items: flex-start;
    height: 30px;
    padding: 0 14px;
    background-color: #fff;
    border-bottom: 1px solid #ccc;
}

.menu {
    height: 22px;
    margin-right: 13px;
}

.menu svg {
    width: 14px;
    height: 12px;
}

.search {
    position: relative;
    width: 177px;
}

.search input {
    width: 100%;
    height: 22px;
    padding: 0 30px 0 22px;
    border: 1px solid #ccc;
    border-radius: 2px;
    background-color: #f4f4f6;
}

.search input::placeholder {
    color: #999;
}

.search svg {
    position: absolute;
    top: 5px;
    right: 13px;
    width: 12px;
    height: 12px;
}

.user {
    display: flex;
    align-items: center;
    height: 25px;
    margin-left: auto;
}

.bell {
    position: relative;
    margin-right: 18px;
}

.bell svg {
    width: 14px;
    height: 15px;
    margin-top: 2px;
}

.bell span {
    position: absolute;
    top: -5px;
    left: 2px;
    width: 19px;
    height: 15px;
    border-radius: 8px;
    background-color: #f00;
    color: #fff;
    font-size: 10px;
    font-weight: bold;
    line-height: 15px;
}

.help {
    justify-content: center;
    width: 13px;
    height: 13px;
    margin-right: 19px;
    border-radius: 50%;
    background-color: #333;
    color: #fff;
    font-size: 10px;
    font-weight: bold;
}

.name {
    margin: 0 19px 0 18px;
}

.name svg {
    width: 5px;
    height: 3px;
    margin-left: 5px;
}

.flag {
    width: 13px;
    height: 10px;
}

.toast {
    position: absolute;
    top: 0;
    left: 50%;
    width: 86px;
    height: 25px;
    margin-left: -36px;
    border: 1px solid #efd9a0;
    border-top: none;
    background-color: #fff3d0;
    line-height: 24px;
    text-align: center;
}

/* Plan toolbar */
.toolbar {
    display: flex;
    gap: 9px;
    padding: 13px 0 15px 14px;
    border-bottom: 1px solid #d2d2d4;
}

.btn {
    height: 29px;
    padding: 2px 10px 0;
    border: 1px solid #ccc;
    border-radius: 3px;
    background-color: #fff;
    white-space: nowrap;
}

.btn svg {
    height: 10px;
}

.arrow {
    width: 11px;
    margin: 0 5px 0 1px;
}

.btn .caret {
    width: 10px;
    height: 5px;
    margin: 0 2px 0 6px;
}

.btn .funnel {
    width: 10px;
    height: 11px;
    margin: 0 6px 0 3px;
}

.btn.square {
    justify-content: center;
    width: 28px;
    padding: 0;
}

.btn.square svg {
    width: 13px;
    height: 13px;
}

.spacer {
    flex: 1;
}

/* Canvas */
.content {
    flex: 1;
    display: flex;
    gap: 13px;
    padding: 14px 0 0 14px;
}

.canvas {
    position: relative;
    flex: 1;
    overflow: hidden;
    border: 1px solid #d9dadc;
    border-bottom: none;
    background-color: #fff;
}

.sheet {
    position: absolute;
    top: 360px;
    left: 17px;
    width: 857px;
    height: 558px;
    font-family: "Liberation Sans", Arial, sans-serif;
}

.tools {
    position: absolute;
    top: 9px;
    display: flex;
    flex-direction: column;
    gap: 9px;
}

.tools.left {
    left: 9px;
}

.tools.right {
    right: 9px;
}

.group {
    width: 27px;
    border-radius: 3px;
    overflow: hidden;
}

.group.lower {
    margin-top: 2px;
}

.group button {
    justify-content: center;
    width: 27px;
    height: 27px;
    background-color: #43464b;
    color: #fff;
}

.group svg {
    width: 15px;
    height: 15px;
    fill: none;
    stroke: #fff;
}

.group button:disabled {
    border-top: 1px solid #8b8d90;
    background-color: #3a3a3a;
}

.group button:disabled svg {
    stroke: #999;
}

.group button.on {
    background-color: #6495ff;
}

.group button.clear {
    background-color: rgba(50, 53, 58, 0.93);
}

.group button.letter {
    font-family: "DejaVu Sans", sans-serif;
    font-size: 17px;
}

.dot {
    width: 13px;
    height: 13px;
    border: 1px solid #fff;
    border-radius: 50%;
    background-color: #f00;
}

/* Drawing */
.edge {
    fill: #fff;
    stroke: #ccc;
    stroke-width: 4;
}

.frame {
    fill: none;
    stroke: #888;
    stroke-width: 3;
}

.line {
    fill: none;
    stroke: #666;
    stroke-width: 3;
}

.thin {
    fill: none;
    stroke: #999;
    stroke-width: 2;
}

.lead {
    fill: none;
    stroke: #777;
    stroke-width: 2;
}

.axis {
    stroke: #aaa;
    stroke-width: 2;
    stroke-dasharray: 52 8 10 8;
}

.bubble {
    fill: #fff;
    stroke: #999;
    stroke-width: 2;
}

.sheet .letter {
    font-size: 14px;
    fill: #777;
    text-anchor: middle;
}

.tag {
    fill: #fff;
    stroke: #777;
    stroke-width: 2;
}

.note {
    font-size: 13px;
    fill: #000;
}

.mid,
.tiny {
    text-anchor: middle;
}

.tiny {
    font-size: 10px;
    fill: #222;
}

.delta {
    fill: none;
    stroke: #777;
    stroke-width: 2;
}

.title {
    font-size: 18px;
    fill: #000;
}

.title-ring {
    fill: #fff;
    stroke: #666;
    stroke-width: 2;
}

.title-line {
    stroke: #888;
    stroke-width: 3;
}

#keynotes,
.block {
    font-size: 12px;
    fill: #000;
}

.wash {
    mix-blend-mode: multiply;
}

.red {
    font-size: 27px;
    fill: #d9302a;
}

.link-ring {
    fill: #fff;
    stroke: #e0625c;
    stroke-width: 3;
}

.pin-text {
    font-size: 20px;
    font-weight: bold;
    fill: #fff;
    text-anchor: middle;
}

/* Task list */
.tasks {
    flex: 0 0 197px;
    text-align: center;
}

.tasks h2 {
    padding: 5px 0;
    font-size: 12px;
}

.tasks ul {
    display: flex;
    flex-direction: column;
    height: 278px;
    border-top: 1px solid #bbb;
    box-shadow: 0 1px 1px #ddd;
    background-color: #fff;
    list-style: none;
}

.tasks li {
    flex: 1;
    display: flex;
    align-items: center;
    border-bottom: 1px solid #ccc;
    text-align: left;
}

.tasks small {
    display: block;
    font-size: 10px;
    line-height: 16px;
    color: #999;
}

.tasks p {
    font-size: 11px;
    line-height: 16px;
}

.tasks p.empty {
    font-style: italic;
    color: #888;
}

.pin {
    position: relative;
    z-index: 0;
    display: flex;
    justify-content: center;
    width: 30px;
    height: 30px;
    margin: 0 5px;
    color: #fff;
    font-weight: bold;
    font-size: 10px;
    line-height: 26px;
}

.pin svg {
    position: absolute;
    z-index: -1;
    top: 0;
    width: 24px;
    height: 30px;
    color: #f98b33;
}

.pin .diamond {
    width: 30px;
}

.tasks button {
    margin: 12px auto 0;
    color: #999;
}
```
